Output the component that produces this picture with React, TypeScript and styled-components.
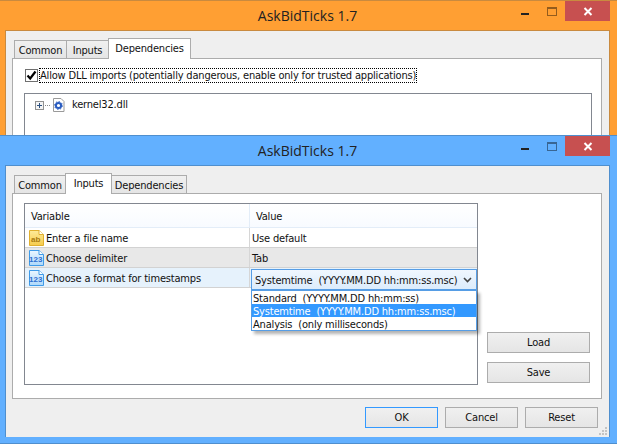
import React from "react";
import styled, { createGlobalStyle } from "styled-components";

const Global = createGlobalStyle`
  html, body { margin: 0; padding: 0; background: #fff; overflow: hidden; }
  body { font-family: "DejaVu Sans", "Liberation Sans", sans-serif; font-stretch: condensed; font-size: 11px; letter-spacing: -0.18px; color: #111; }
`;

const Desktop = styled.div`
  position: relative;
  width: 617px;
  height: 445px;
  overflow: hidden;
`;

const Win = styled.div<{ $bg: string; $edge: string; $top: number; $h: number }>`
  position: absolute;
  left: 0;
  top: ${p => p.$top}px;
  width: 617px;
  height: ${p => p.$h}px;
  box-sizing: border-box;
  background: ${p => p.$bg};
  border-top: 1px solid ${p => p.$edge};
  border-bottom: 1px solid ${p => p.$edge};
  padding: 0 7px 6px 5px;
  display: flex;
  flex-direction: column;
  --edge: ${p => p.$edge};
`;

const TitleBar = styled.div`
  height: 29px;
  flex: none;
  position: relative;
  display: flex;
  align-items: center;
  justify-content: center;
  font-family: "Open Sans", "Noto Sans", sans-serif;
  font-stretch: normal;
  letter-spacing: 0;
  font-size: 14px;
  color: #222;
`;

const Ctl = styled.div`
  position: absolute;
  right: 0;
  top: 0;
  display: flex;
  align-items: flex-start;
`;

const Min = styled.div`
  width: 8px;
  height: 2px;
  background: #222;
  margin: 12px 18px 0 0;
`;

const Max = styled.div`
  width: 8px;
  height: 6px;
  border: 1px solid rgba(0, 0, 0, 0.42);
  border-top-width: 2px;
  margin: 6px 8px 0 0;
`;

const Close = styled.div`
  width: 45px;
  height: 20px;
  background: #c75050;
  display: flex;
  align-items: center;
  justify-content: center;
`;

const Client = styled.div`
  flex: 1;
  min-height: 0;
  position: relative;
  box-sizing: border-box;
  background: #efefef;
  border: 1px solid var(--edge);
  border-width: 1px 1px 0 1px;
  padding: 8px 7px 0 6px;
  display: flex;
  flex-direction: column;
`;

const Tabs = styled.div`
  height: 20px;
  flex: none;
  display: flex;
  align-items: flex-end;
  padding-left: 3px;
  margin-bottom: -1px;
  position: relative;
  z-index: 1;
`;

const Tab = styled.div<{ $active?: boolean; $w: number }>`
  box-sizing: border-box;
  flex: none;
  width: ${p => p.$w}px;
  height: ${p => (p.$active ? 21 : 19)}px;
  border: 1px solid #acacac;
  border-bottom: ${p => (p.$active ? "none" : "1px solid #acacac")};
  margin-left: -1px;
  background: ${p => (p.$active ? "#fff" : "linear-gradient(#f0f0f0,#e5e5e5)")};
  display: flex;
  align-items: center;
  justify-content: center;
  padding-bottom: ${p => (p.$active ? 2 : 0)}px;
  padding-top: ${p => (p.$active ? 0 : 1)}px;
  z-index: ${p => (p.$active ? 2 : 0)};
`;

const Pane = styled.div<{ $h?: number }>`
  box-sizing: border-box;
  height: ${p => (p.$h ? `${p.$h}px` : "auto")};
  flex: none;
  background: #fff;
  border: 1px solid #acacac;
`;

const InputsBody = styled.div`
  display: flex;
  padding: 9px 11px 13px 11px;
  gap: 9px;
  height: 100%;
  box-sizing: border-box;
`;

const Table = styled.div`
  position: relative;
  width: 454px;
  flex: none;
  box-sizing: border-box;
  border: 1px solid #828790;
`;

const Header = styled.div`
  display: grid;
  grid-template-columns: 225px 1fr;
  height: 24px;
  box-sizing: border-box;
  border-bottom: 1px solid #e3edf8;
  background: linear-gradient(#fff, #f8fbff);
`;

const HeadCell = styled.div`
  display: flex;
  align-items: center;
  padding: 2px 0 0 6px;
  border-right: 1px solid #e3edf8;
  &:last-child { border-right: none; }
`;

const Row = styled.div<{ $bg: string }>`
  display: grid;
  grid-template-columns: 225px 1fr;
  height: 20px;
  box-sizing: border-box;
  background: ${p => p.$bg};
  border-bottom: 1px solid #d2d2d2;
`;

const NameCell = styled.div`
  display: flex;
  align-items: center;
  gap: 2px;
  padding-left: 3px;
  border-right: 1px solid #d6d6d6;
`;

const RowText = styled.span`
  padding-top: 2px;
`;

const ValueCell = styled.div`
  display: flex;
  align-items: center;
  padding: 2px 0 0 2px;
`;

const Combo = styled.div`
  position: absolute;
  left: 226px;
  top: 65px;
  width: 226px;
  height: 21px;
  box-sizing: border-box;
  border: 1px solid #569de5;
  background: linear-gradient(#f0f7fe, #dcecfc);
  display: flex;
  align-items: center;
  justify-content: space-between;
  padding: 1px 4px 0 3px;
  white-space: pre;
`;

const Drop = styled.div`
  position: absolute;
  left: 226px;
  top: 86px;
  width: 226px;
  box-sizing: border-box;
  background: #fff;
  border: 1px solid #569de5;
  box-shadow: 3px 3px 3px rgba(0,0,0,.3);
  display: flex;
  flex-direction: column;
  z-index: 3;
`;

const Opt = styled.div<{ $sel?: boolean }>`
  height: 13px;
  line-height: 15px;
  padding-left: 1px;
  background: ${p => (p.$sel ? "#3399ff" : "transparent")};
  color: ${p => (p.$sel ? "#fff" : "#111")};
  white-space: pre;
`;

const Side = styled.div`
  flex: 1;
  display: flex;
  flex-direction: column;
  justify-content: flex-end;
  gap: 9px;
  padding-bottom: 2px;
`;

const Btn = styled.div<{ $focus?: boolean; $w?: number }>`
  box-sizing: border-box;
  height: 21px;
  width: ${p => (p.$w ? `${p.$w}px` : "103px")};
  border: 1px solid ${p => (p.$focus ? "#3399ff" : "#acacac")};
  background: linear-gradient(#f0f0f0, #e5e5e5);
  display: flex;
  align-items: center;
  justify-content: center;
`;

const Footer = styled.div`
  display: flex;
  justify-content: flex-end;
  gap: 7px;
  padding: 8px 4px 0 0;
`;

const Grip = styled.svg`
  position: absolute;
  right: 1px;
  bottom: 1px;
`;

const DepBody = styled.div`
  padding: 9px 9px 8px 11px;
  display: flex;
  flex-direction: column;
  gap: 10px;
`;

const CheckRow = styled.div`
  display: flex;
  align-items: center;
  gap: 1px;
  padding-left: 1px;
`;

const Check = styled.div`
  width: 13px;
  height: 13px;
  box-sizing: border-box;
  border: 1px solid #707070;
  background: #fff;
  display: flex;
  align-items: center;
  justify-content: center;
  flex: none;
`;

const CheckLabel = styled.div`
  border: 1px dotted #000;
  line-height: 13px;
  white-space: nowrap;
`;

const TreeBox = styled.div`
  height: 60px;
  box-sizing: border-box;
  border: 1px solid #828790;
  padding: 4px 10px;
  display: flex;
  align-items: flex-start;
  gap: 7px;
`;

const TreeIcons = styled.svg`
  flex: none;
`;

const TreeText = styled.div`
  line-height: 13px;
`;

const IconText = styled.text`
  font-family: "Liberation Sans", sans-serif;
  font-stretch: normal;
  letter-spacing: 0;
  font-size: 8px;
  font-weight: 700;
`;

const X = () => (
  <svg width="10" height="9" viewBox="0 0 10 9">
    <path d="M1.5 1 L8.5 8 M8.5 1 L1.5 8" stroke="#fff" strokeWidth="2" />
  </svg>
);

const Controls = () => (
  <Ctl>
    <Min />
    <Max />
    <Close><X /></Close>
  </Ctl>
);

const TypeIcon = ({ kind }: { kind: "ab" | "123" }) => {
  const yellow = kind === "ab";
  const edge = yellow ? "#e0b030" : "#3f9be8";
  const ink = yellow ? "#a87a10" : "#2f6fd0";
  const id = yellow ? "fillAb" : "fillNum";
  return (
    <svg width="16" height="16" viewBox="0 0 16 16">
      <defs>
        <linearGradient id={id} x1="0" y1="0" x2="0" y2="1">
          <stop offset="0" stopColor={yellow ? "#fdeb9a" : "#eaf6ff"} />
          <stop offset="1" stopColor={yellow ? "#f6cb4c" : "#aed8fa"} />
        </linearGradient>
      </defs>
      <path d="M1.5.5 H11 L15.5 4.5 V15.5 H1.5 Z" fill={`url(#${id})`} stroke={edge} />
      <path d="M11 .5 V4.5 H15.5" fill="#fff" stroke={edge} />
      <IconText x={yellow ? 3 : 1} y="12" fill={ink}>{kind}</IconText>
    </svg>
  );
};

export default function App() {
  return (
    <Desktop>
      <Global />
      <Win $bg="#ff9f33" $edge="#c98a3f" $top={0} $h={200}>
        <TitleBar>AskBidTicks 1.7<Controls /></TitleBar>
        <Client>
          <Tabs>
            <Tab $w={53}>Common</Tab>
            <Tab $w={43}>Inputs</Tab>
            <Tab $w={83} $active>Dependencies</Tab>
          </Tabs>
          <Pane $h={150}>
            <DepBody>
              <CheckRow>
                <Check>
                  <svg width="11" height="11" viewBox="0 0 11 11">
                    <path d="M1.5 5.5 L4.2 8.5 L9.5 1.5" fill="none" stroke="#000" strokeWidth="2.2" />
                  </svg>
                </Check>
                <CheckLabel>Allow DLL imports (potentially dangerous, enable only for trusted applications)</CheckLabel>
              </CheckRow>
              <TreeBox>
                <TreeIcons width="30" height="15" viewBox="0 0 30 15">
                  <rect x="0.5" y="3.5" width="8" height="8" fill="#f4f4f4" stroke="#919191" />
                  <path d="M2 7.5 H7 M4.5 5 V10" stroke="#2a4f80" />
                  <path d="M10 7.5 H15" stroke="#888" strokeDasharray="1 1" />
                  <path d="M18.5 .5 H26 L29 3.5 V13.5 H18.5 Z" fill="#fff" stroke="#9a9a9a" />
                  <circle cx="23.5" cy="7.5" r="2.6" fill="none" stroke="#2a5cc0" strokeWidth="2" />
                  <circle cx="23.5" cy="7.5" r="3.9" fill="none" stroke="#2a5cc0" strokeWidth="1" strokeDasharray="1.5 1.5" />
                </TreeIcons>
                <TreeText>kernel32.dll</TreeText>
              </TreeBox>
            </DepBody>
          </Pane>
        </Client>
      </Win>

      <Win $bg="#62b0ff" $edge="#4f8fce" $top={135} $h={309}>
        <TitleBar>AskBidTicks 1.7<Controls /></TitleBar>
        <Client>
          <Tabs>
            <Tab $w={52}>Common</Tab>
            <Tab $w={47} $active>Inputs</Tab>
            <Tab $w={76}>Dependencies</Tab>
          </Tabs>
          <Pane $h={206}>
            <InputsBody>
              <Table>
                <Header>
                  <HeadCell>Variable</HeadCell>
                  <HeadCell>Value</HeadCell>
                </Header>
                <Row $bg="#fff">
                  <NameCell><TypeIcon kind="ab" /><RowText>Enter a file name</RowText></NameCell>
                  <ValueCell>Use default</ValueCell>
                </Row>
                <Row $bg="#e8e8e8">
                  <NameCell><TypeIcon kind="123" /><RowText>Choose delimiter</RowText></NameCell>
                  <ValueCell>Tab</ValueCell>
                </Row>
                <Row $bg="#e6f2fc">
                  <NameCell><TypeIcon kind="123" /><RowText>Choose a format for timestamps</RowText></NameCell>
                  <ValueCell />
                </Row>
                <Combo>
                  {"Systemtime  (YYYY.MM.DD hh:mm:ss.msc)"}
                  <svg width="9" height="6" viewBox="0 0 9 6">
                    <path d="M1 1 L4.5 4.5 L8 1" fill="none" stroke="#444" strokeWidth="1.6" />
                  </svg>
                </Combo>
                <Drop>
                  <Opt>{"Standard  (YYYY.MM.DD hh:mm:ss)"}</Opt>
                  <Opt $sel>{"Systemtime  (YYYY.MM.DD hh:mm:ss.msc)"}</Opt>
                  <Opt>{"Analysis  (only milliseconds)"}</Opt>
                </Drop>
              </Table>
              <Side>
                <Btn>Load</Btn>
                <Btn>Save</Btn>
              </Side>
            </InputsBody>
          </Pane>
          <Footer>
            <Btn $focus $w={73}>OK</Btn>
            <Btn $w={73}>Cancel</Btn>
            <Btn $w={73}>Reset</Btn>
          </Footer>
          <Grip width="9" height="9" viewBox="0 0 9 9">
            <path d="M6 0h2v2H6z M3 3h2v2H3z M6 3h2v2H6z M0 6h2v2H0z M3 6h2v2H3z M6 6h2v2H6z" fill="#c4c4c4" />
          </Grip>
        </Client>
      </Win>
    </Desktop>
  );
}
